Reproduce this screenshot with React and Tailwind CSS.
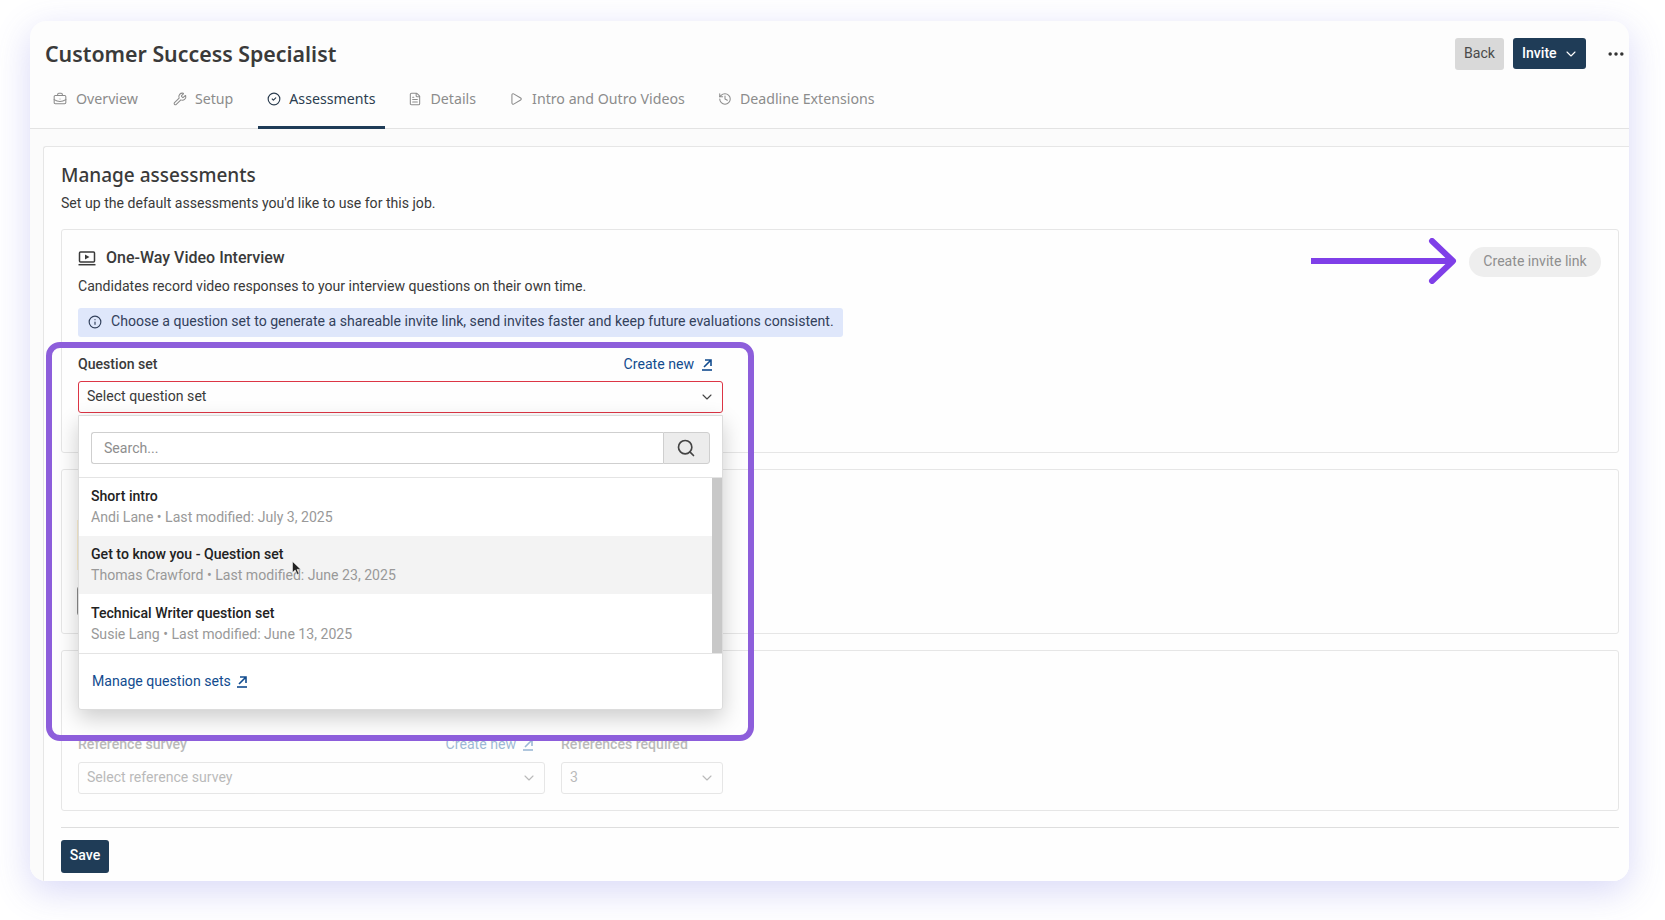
import { BriefcaseBusiness, Wrench, CircleCheck, FileText, Play, History, Info, Search, ChevronDown, Ellipsis } from 'lucide-react';

const tabs = [
  { label: 'Overview', icon: BriefcaseBusiness, cls: 'gap-[9px]' },
  { label: 'Setup', icon: Wrench, cls: 'ml-[17px] gap-[8px]' },
  { label: 'Assessments', icon: CircleCheck, active: true, cls: 'ml-[16px] gap-[8px]' },
  { label: 'Details', icon: FileText, cls: 'ml-[14px] gap-[9px]' },
  { label: 'Intro and Outro Videos', icon: Play, cls: 'ml-[15px] gap-[9px]' },
  { label: 'Deadline Extensions', icon: History, cls: 'ml-[15px] gap-[8px]' },
];

const questionSets = [
  { name: 'Short intro', meta: 'Andi Lane • Last modified: July 3, 2025', h: 'h-[58px]' },
  { name: 'Get to know you - Question set', meta: 'Thomas Crawford • Last modified: June 23, 2025', h: 'h-[58px]', hover: true },
  { name: 'Technical Writer question set', meta: 'Susie Lang • Last modified: June 13, 2025', h: 'h-[59px]' },
];

// Arrow leaving a box, underlined
function OpenIcon() {
  return (
    <svg width="12" height="13" viewBox="0 0 12 13" fill="none" stroke="currentColor" strokeWidth="1.6" className="shrink-0">
      <path d="M3 9 L10 2 M4 2 H10 V8" />
      <path d="M1 12 H11" />
    </svg>
  );
}

function VideoIcon() {
  return (
    <svg width="18" height="15" viewBox="0 0 18 15" fill="none" stroke="#3a3a3a" strokeWidth="1.5" className="shrink-0">
      <rect x="1.5" y="1" width="15" height="10" rx="1" />
      <path d="M7 3.5 L11.5 6 L7 8.5 Z" fill="#3a3a3a" stroke="none" />
      <path d="M0.5 13.7 H17.5" />
    </svg>
  );
}

function Cursor() {
  return (
    <svg width="11" height="15" viewBox="0 0 11 15" className="absolute left-[213px] top-[25px]">
      <path d="M0.5 0.5 V11.5 L3.2 9 L5.2 13.5 L7 12.7 L5 8.4 H8.8 Z" fill="#222" stroke="#fff" strokeWidth="0.5" />
    </svg>
  );
}

function QuestionSetMenu() {
  return (
    <div className="absolute left-0 top-[34px] z-20 flex h-[295px] w-[645px] flex-col rounded-b-[3px] border border-[#dcdcdc] bg-white shadow-[0_8px_22px_rgba(0,0,0,0.2)]">
      <div className="flex h-[62px] shrink-0 items-start border-b border-[#e4e4e4] pl-[12px] pr-[12px] pt-[16px]">
        <div className="flex h-[32px] flex-1 items-center rounded-l-[3px] border border-r-0 border-[#cfcfcf] pl-[12px] pt-px text-[#8e8e8e]">Search...</div>
        <div className="flex h-[32px] w-[47px] items-center justify-center rounded-r-[3px] border border-[#cfcfcf] bg-[#ececec] pr-[2px]">
          <Search className="h-[20px] w-[20px] text-[#444]" strokeWidth={2} />
        </div>
      </div>
      <div className="flex h-[175px] shrink-0">
        <div className="flex-1">
          {questionSets.map((q) => (
            <div key={q.name} className={`relative flex flex-col justify-center gap-[1px] pb-px pl-[12px] ${q.h} ${q.hover ? 'bg-[#f3f3f3]' : ''}`}>
              <span className="font-medium leading-5 text-[#222]">{q.name}</span>
              <span className="leading-5 text-[#999]">{q.meta}</span>
              {q.hover && <Cursor />}
            </div>
          ))}
        </div>
        <div className="w-[10px] bg-[#c8c8c8]" />
      </div>
      <div className="flex flex-1 items-center gap-[5px] border-t border-[#e4e4e4] pl-[13px] text-[#124c8f]">
        Manage question sets <OpenIcon />
      </div>
    </div>
  );
}

export default function App() {
  return (
    <div className="relative h-[920px] w-[1665px] overflow-hidden bg-white pl-[30px] pt-[21px] font-['Roboto',sans-serif] text-[14.1px] text-[#3a3a3a]">
      <div className="flex h-[860px] w-[1599px] flex-col overflow-hidden rounded-[16px] bg-[#fdfdfd] shadow-[0_10px_36px_rgba(90,90,220,0.24)]">
        {/* header */}
        <div className="flex h-[63px] shrink-0 items-start justify-between pl-[15px] pr-[3px] pt-[17px]">
          <h1 className="font-['Noto_Sans',sans-serif] text-[21.35px] font-semibold leading-8 text-[#3a3a3a]">Customer Success Specialist</h1>
          <div className="flex items-start">
            <button className="h-[32px] w-[49px] rounded-[3px] bg-[#d9d9d9] pb-px text-[#4a4a4a]">Back</button>
            <button className="ml-[9px] flex h-[31px] w-[73px] items-center gap-[6px] rounded-[3px] bg-[#1f3c57] pl-[9px] font-medium text-white">
              Invite <ChevronDown className="h-4 w-4" strokeWidth={1.6} />
            </button>
            <Ellipsis className="ml-[20px] mt-[6px] h-[20px] w-[20px] text-[#333]" strokeWidth={2.2} />
          </div>
        </div>

        {/* tabs */}
        <nav className="flex h-[45px] shrink-0 border-b border-[#e3e3e3] pl-[14px] font-['Noto_Sans',sans-serif] text-[14.2px]">
          {tabs.map((t) => {
            const Icon = t.icon;
            return (
              <div key={t.label} className={`-mb-px flex h-[45px] items-start ${t.cls} border-b-[3px] px-[9px] pt-[5px] ${t.active ? 'border-[#1f3c57] text-[#2c3e50]' : 'border-transparent text-[#8c8c8c]'}`}>
                <Icon className="mt-[3px] h-[14px] w-[14px] shrink-0" strokeWidth={t.active ? 2 : 1.8} />
                <span className="leading-5">{t.label}</span>
              </div>
            );
          })}
        </nav>

        <div className="min-h-0 flex-1 bg-[#fbfbfb] pl-[13px] pt-[17px]">
          <div className="h-full rounded-tl-[3px] border-l border-t border-[#e6e6e6] bg-[#fefefe] pl-[17px] pr-[10px] pt-[14px]">
            <h2 className="font-['Noto_Sans',sans-serif] text-[19px] font-medium leading-7 text-[#3a3a3a]">Manage assessments</h2>
            <p className="mt-[4px] leading-5 text-[#3a3a3a]">Set up the default assessments you'd like to use for this job.</p>

            {/* one-way video */}
            <section className="mt-[16px] flex h-[224px] justify-between rounded-[3px] border border-[#e6e6e6] pl-[16px] pr-[17px] pt-[18px]">
              <div>
                <div className="flex h-5 items-center gap-[10px] text-[16px] font-medium">
                  <VideoIcon />
                  <span>One-Way Video Interview</span>
                </div>
                <p className="mt-[8px] leading-5">Candidates record video responses to your interview questions on their own time.</p>
                <div className="mt-[12px] flex h-[29px] w-[765px] items-center gap-[9px] rounded-[3px] bg-[#dfe7fb] pb-[2px] pl-[10px] text-[#33415c]">
                  <Info className="h-[14px] w-[14px] shrink-0" strokeWidth={2} />
                  Choose a question set to generate a shareable invite link, send invites faster and keep future evaluations consistent.
                </div>
                <div className="mt-[17px] flex w-[644px] items-center justify-between pr-[9px]">
                  <span className="font-medium leading-5">Question set</span>
                  <span className="flex items-center gap-[7px] leading-5 text-[#124c8f]">Create new <OpenIcon /></span>
                </div>
                <div className="relative mt-[7px] w-[645px]">
                  <div className="flex h-[32px] items-center justify-between rounded-[3px] border border-[#dc3545] pb-px pl-[8px] pr-[7px]">
                    Select question set <ChevronDown className="mt-px h-4 w-4 text-[#444]" strokeWidth={1.6} />
                  </div>
                  <QuestionSetMenu />
                </div>
              </div>
              <button className="-mt-px h-[30px] w-[132px] rounded-full bg-[#eeeeee] text-[#8f8f8f]">Create invite link</button>
            </section>

            {/* second assessment, almost fully behind the menu */}
            <section className="mt-[16px] h-[165px] rounded-[3px] border border-[#e6e6e6] pl-[15px] pt-[50px]">
              <div className="h-[50px] w-[644px] bg-[#fdf0d0]" />
              <div className="mt-[16px] h-[30px] w-[645px] rounded-[3px] border border-[#8a8a8a]" />
            </section>

            {/* reference check, disabled */}
            <section className="mt-[16px] flex h-[161px] flex-col justify-end rounded-[3px] border border-[#e6e6e6] pb-[16px] pl-[16px]">
              <div className="flex gap-[16px] leading-5 opacity-50">
                <div className="w-[467px]">
                  <div className="flex items-center justify-between pr-[11px]">
                    <span className="font-medium text-[#777]">Reference survey</span>
                    <span className="flex items-center gap-[6px] text-[#3d74ad]">Create new <OpenIcon /></span>
                  </div>
                  <div className="mt-[8px] flex h-[32px] items-center justify-between rounded-[3px] border border-[#cfcfcf] pb-[2px] pl-[8px] pr-[7px] text-[#777]">
                    Select reference survey <ChevronDown className="mt-[2px] h-4 w-4" strokeWidth={1.6} />
                  </div>
                </div>
                <div className="w-[162px]">
                  <span className="font-medium text-[#777]">References required</span>
                  <div className="mt-[8px] flex h-[32px] items-center justify-between rounded-[3px] border border-[#cfcfcf] pb-[2px] pl-[8px] pr-[7px] text-[#777]">
                    3 <ChevronDown className="mt-[2px] h-4 w-4" strokeWidth={1.6} />
                  </div>
                </div>
              </div>
            </section>

            <div className="mt-[16px] border-t border-[#dedede] pt-[12px]">
              <button className="h-[33px] w-[48px] rounded-[3px] bg-[#1f3c57] pb-[2px] font-medium text-white">Save</button>
            </div>
          </div>
        </div>
      </div>

      {/* annotations on top of the screenshot */}
      <div className="absolute left-[46px] top-[342px] z-30 h-[399px] w-[708px] rounded-[14px] border-[6px] border-[#8d5edb]" />
      <svg width="148" height="46" viewBox="0 0 148 46" fill="none" stroke="#7f3fe8" strokeWidth="6" className="absolute left-[1311px] top-[238px] z-30">
        <path d="M0 23 H142" />
        <path d="M121 3 L142 23 L121 43" strokeLinecap="round" strokeLinejoin="round" />
      </svg>
    </div>
  );
}
